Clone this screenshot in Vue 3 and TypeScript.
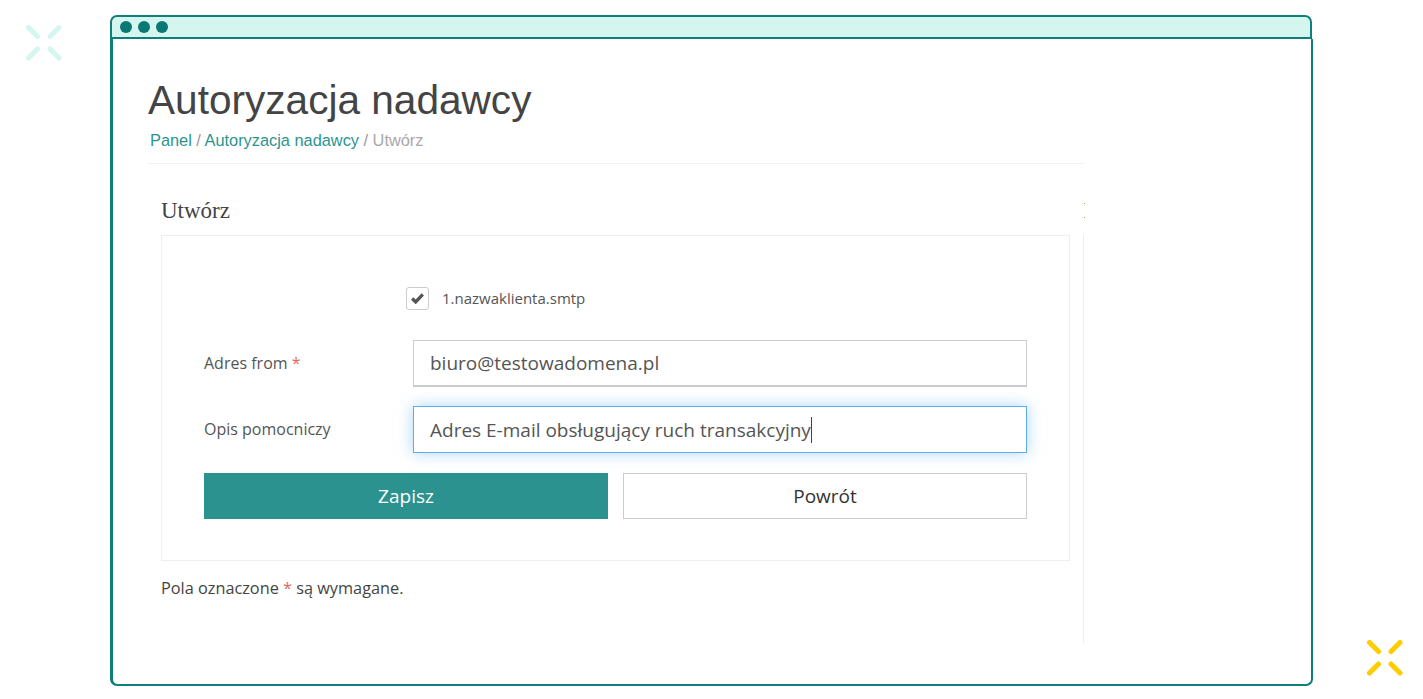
<script setup lang="ts">
const marks = [
  { id: 'teal', cls: 'mark-teal' },
  { id: 'yellow', cls: 'mark-yellow' },
];
</script>

<template>
  <div class="page">
    <svg
      v-for="m in marks"
      :key="m.id"
      :class="['mark', m.cls]"
      viewBox="0 0 36 36"
      width="36"
      height="36"
    >
      <path d="M2.5 2.5l9 9M33 2.5l-9 9M2.5 33l9-9M33 33l-9-9" />
    </svg>

    <div class="frame">
      <div class="titlebar">
        <span class="dot"></span>
        <span class="dot"></span>
        <span class="dot"></span>
      </div>

      <div class="window">
        <div class="content">
          <div class="page-head">
            <h1>Autoryzacja nadawcy</h1>
            <div class="crumbs">
              <a>Panel</a> / <a>Autoryzacja nadawcy</a> / <span>Utwórz</span>
            </div>
          </div>

          <div class="body">
            <span class="speck"></span>
            <h2>Utwórz</h2>
            <div class="col">
              <div class="panel">
                <div class="check-row">
                  <span class="checkbox">
                    <svg viewBox="0 0 14 12" width="13" height="11">
                      <path d="M1.2 6l3.8 3.8 7.8-8.2" />
                    </svg>
                  </span>
                  <span class="check-label">1.nazwaklienta.smtp</span>
                </div>

                <div class="field">
                  <label>Adres from <em>*</em></label>
                  <input type="text" value="biuro@testowadomena.pl" />
                </div>

                <div class="field second">
                  <label>Opis pomocniczy</label>
                  <div class="input focused">Adres E-mail obsługujący ruch transakcyjny<i class="caret"></i></div>
                </div>

                <div class="buttons">
                  <button class="save">Zapisz</button>
                  <button class="back">Powrót</button>
                </div>
              </div>

              <p class="note">Pola oznaczone <em>*</em> są wymagane.</p>
            </div>
          </div>
        </div>
      </div>
    </div>
  </div>
</template>

<style scoped>
.page {
  position: relative;
  width: 1423px;
  height: 699px;
  box-sizing: border-box;
  padding: 15px 111px 13px 110px;
  background: #fff;
  font-family: "Open Sans", sans-serif;
  overflow: hidden;
}
.mark {
  position: absolute;
}
.mark path {
  fill: none;
  stroke-width: 5;
  stroke-linecap: round;
}
.mark-teal {
  left: 26px;
  top: 25px;
}
.mark-teal path {
  stroke: #d5f5ef;
}
.mark-yellow {
  left: 1367px;
  top: 640px;
}
.mark-yellow path {
  stroke: #ffcc00;
}
.frame {
  height: 100%;
  display: flex;
  flex-direction: column;
}
.titlebar {
  height: 20px;
  display: flex;
  align-items: center;
  gap: 6px;
  padding-left: 8px;
  background: #d5f5ef;
  border: 2px solid #0f7f7c;
  border-radius: 7px 7px 0 0;
  flex-shrink: 0;
}
.dot {
  width: 12px;
  height: 12px;
  border-radius: 50%;
  background: #0a7874;
}
.window {
  flex: 1;
  margin-right: -1px;
  border: 2px solid #0f7f7c;
  border-left-width: 3px;
  border-top: 0;
  border-radius: 0 0 7px 7px;
  padding-left: 35px;
}
.content {
  width: 936px;
}
.page-head {
  padding-top: 36px;
  height: 88px;
  border-bottom: 1px solid #f2f2f2;
}
h1 {
  margin: 0;
  font: 400 40.6px/50px "Liberation Sans", Arial, sans-serif;
  color: #444;
}
.crumbs {
  margin: 5px 0 0 2px;
  font: 16.35px/20px "Liberation Sans", Arial, sans-serif;
  color: #999;
}
.crumbs a {
  color: #2a9490;
}
.crumbs span {
  color: #a8a8a8;
}
.body {
  padding: 34px 0 0 13px;
  position: relative;
}
.speck {
  position: absolute;
  left: 936px;
  top: 39px;
  width: 1px;
  height: 1px;
  background: #c98a4a;
  box-shadow: 0 14px 0 #c98a4a;
}
h2 {
  margin: 0 0 11px;
  font: 400 23px/26px "Liberation Serif", Georgia, serif;
  color: #444;
}
.col {
  height: 408px;
  border-right: 1px solid #eee;
}
.panel {
  width: 909px;
  height: 326px;
  box-sizing: border-box;
  border: 1px solid #eee;
  padding: 50px 42px 0;
}
.check-row {
  display: flex;
  align-items: center;
  gap: 13px;
  margin-left: 202px;
  height: 24px;
}
.checkbox {
  width: 21px;
  height: 21px;
  border: 1px solid #ccc;
  border-radius: 3px;
  display: flex;
  align-items: center;
  justify-content: center;
}
.checkbox path {
  fill: none;
  stroke: #555;
  stroke-width: 3.6;
}
.check-label {
  font-size: 15px;
  color: #555;
}
.field {
  display: flex;
  align-items: center;
  margin-top: 30px;
}
.field.second {
  margin-top: 19px;
}
label {
  width: 209px;
  padding-bottom: 2px;
  font-size: 16px;
  color: #555;
}
em {
  font-style: normal;
  color: #e6675f;
}
input,
.input {
  width: 614px;
  height: 47px;
  box-sizing: border-box;
  padding: 0 16px;
  font: 19px "Open Sans", sans-serif;
  color: #555;
  background: #fff;
  border: 1px solid #ccc;
  border-bottom-width: 2px;
  outline: none;
}
.input {
  display: flex;
  align-items: center;
  white-space: pre;
}
.focused {
  border: 1px solid #5aaef0;
  box-shadow: 0 0 14px rgba(90, 174, 240, 0.5);
}
.caret {
  width: 1px;
  height: 26px;
  background: #444;
}
.buttons {
  display: flex;
  gap: 15px;
  margin-top: 20px;
}
button {
  width: 404px;
  height: 46px;
  font: 19px "Open Sans", sans-serif;
}
.save {
  background: #2b9290;
  color: #fff;
  border: 0;
  font-weight: 500;
}
.back {
  background: #fff;
  color: #333;
  border: 1px solid #ccc;
}
.note {
  margin: 16px 0 0;
  font-size: 16.3px;
  line-height: 22px;
  color: #444;
}
</style>

<style>
body {
  margin: 0;
}
</style>
